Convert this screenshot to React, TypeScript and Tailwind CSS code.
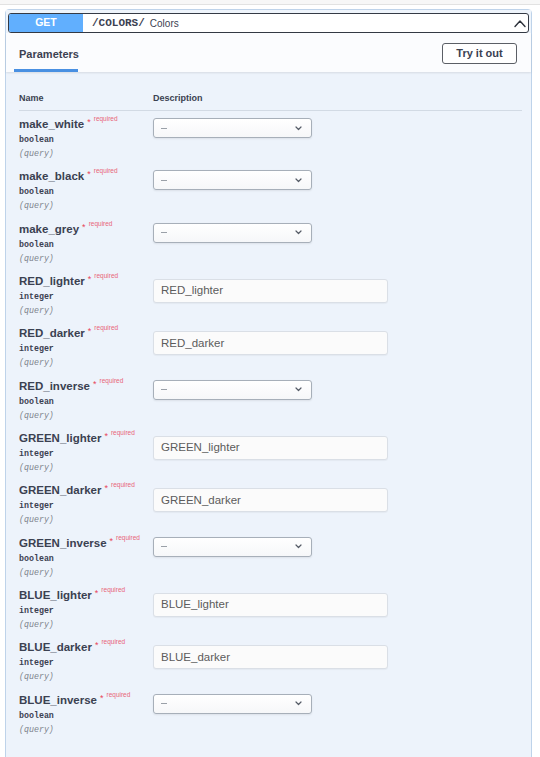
import React from "react";

type Param = { name: string; type: "boolean" | "integer" };

const params: Param[] = [
  { name: "make_white", type: "boolean" },
  { name: "make_black", type: "boolean" },
  { name: "make_grey", type: "boolean" },
  { name: "RED_lighter", type: "integer" },
  { name: "RED_darker", type: "integer" },
  { name: "RED_inverse", type: "boolean" },
  { name: "GREEN_lighter", type: "integer" },
  { name: "GREEN_darker", type: "integer" },
  { name: "GREEN_inverse", type: "boolean" },
  { name: "BLUE_lighter", type: "integer" },
  { name: "BLUE_darker", type: "integer" },
  { name: "BLUE_inverse", type: "boolean" },
];

function SelectBox() {
  return (
    <div className="mt-[7px] w-[159px] h-[20px] border border-[#a7afb9] rounded-[3px] bg-gradient-to-b from-white to-[#f6f7f9] shadow-[0_1px_2px_rgba(0,0,0,0.08)] flex items-center justify-between pl-[7px] pr-[9px]">
      <span className="block w-[6px] h-px bg-[#9aa0a8]" />
      <svg width="7" height="5" viewBox="0 0 7 5">
        <path d="M1 1 L3.5 3.5 L6 1" fill="none" stroke="#555b66" strokeWidth="1.2" strokeLinecap="round" strokeLinejoin="round" />
      </svg>
    </div>
  );
}

function InputBox({ placeholder }: { placeholder: string }) {
  return (
    <div className="mt-[11px] w-[235px] h-[24px] border border-[#dadfe6] rounded-[3px] bg-[#fbfbfb] shadow-[0_1px_1px_rgba(0,0,0,0.04)] flex items-center pl-[7px] text-[11.5px] text-[#5c5c5c]">
      {placeholder}
    </div>
  );
}

function Row({ p }: { p: Param }) {
  return (
    <div className="h-[52.33px] flex items-start">
      <div className="w-[134px] pt-[6px]">
        <div className="flex items-start leading-[14px]">
          <span className="text-[11.5px] font-bold text-[#3b4151]">{p.name}</span>
          <span className="ml-[3px] text-[9px] leading-[9px] text-[#e8435a] relative top-[1px]">*</span>
          <span className="ml-[3px] text-[6.5px] leading-[7px] text-[#e86478] relative -top-[2px]">required</span>
        </div>
        <div className="mt-[2px] font-['Liberation_Mono',monospace] text-[8.3px] leading-[13px] font-bold text-[#3b4151]">
          {p.type}
        </div>
        <div className="mt-[1px] font-['Liberation_Mono',monospace] text-[8.3px] leading-[13px] italic text-[#7d838c]">
          (query)
        </div>
      </div>
      <div>{p.type === "boolean" ? <SelectBox /> : <InputBox placeholder={p.name} />}</div>
    </div>
  );
}

export default function App() {
  return (
    <div className="w-[540px] h-[757px] overflow-hidden bg-white font-['Liberation_Sans',Arial,sans-serif]">
      <div className="h-[4px] bg-[#f7f7f7]" />
      <div className="h-px bg-[#e2e2e2]" />
      <div className="h-[4px] bg-white" />
      <div className="ml-[5px] w-[527px] h-[800px] border border-[#bed3ea] rounded-t-[4px] bg-[#edf3fb]">
        {/* header */}
        <div className="pt-[3px] px-[2px] bg-[#eef4fb]">
          <div className="h-[20px] w-[521px] border border-[#343a45] rounded-[3px] bg-white flex items-center overflow-hidden">
            <div className="w-[74px] h-full bg-[#61affe] flex items-center justify-center text-white font-bold text-[10.5px]">
              GET
            </div>
            <span className="ml-[9px] font-['Liberation_Mono',monospace] font-bold text-[11px] text-[#3b4151]">
              /COLORS/
            </span>
            <span className="ml-[5px] text-[10px] text-[#3b4151]">Colors</span>
            <div className="flex-1" />
            <svg className="mr-[2px]" width="12" height="9" viewBox="0 0 12 9">
              <path d="M1 7.5 L6 2 L11 7.5" fill="none" stroke="#2d323b" strokeWidth="1.4" strokeLinecap="round" strokeLinejoin="round" />
            </svg>
          </div>
        </div>
        {/* tab section */}
        <div className="h-[39px] bg-[#fbfcfe] shadow-[0_1px_2px_rgba(0,0,0,0.1)] flex items-end justify-between pl-[8px] pr-[14px]">
          <div className="flex flex-col items-stretch">
            <div className="px-[5px] text-[11px] font-bold text-[#3b4151] leading-[14px] pb-[8px]">Parameters</div>
            <div className="h-[3px] w-[64px] bg-[#4990e2]" />
          </div>
          <div className="self-start mt-[10px] w-[75px] h-[21px] border-[1.5px] border-[#5b5f66] rounded-[3px] bg-white flex items-center justify-center text-[11px] font-bold text-[#3b4151]">
            Try it out
          </div>
        </div>
        {/* table */}
        <div className="pl-[13px] pr-[9px]">
          <div className="pt-[20px] pb-[6px] border-b border-[#d2dae4] flex text-[9px] leading-[12px] font-bold text-[#3b4151]">
            <div className="w-[134px]">Name</div>
            <div>Description</div>
          </div>
          {params.map((p) => (
            <Row key={p.name} p={p} />
          ))}
        </div>
      </div>
    </div>
  );
}
